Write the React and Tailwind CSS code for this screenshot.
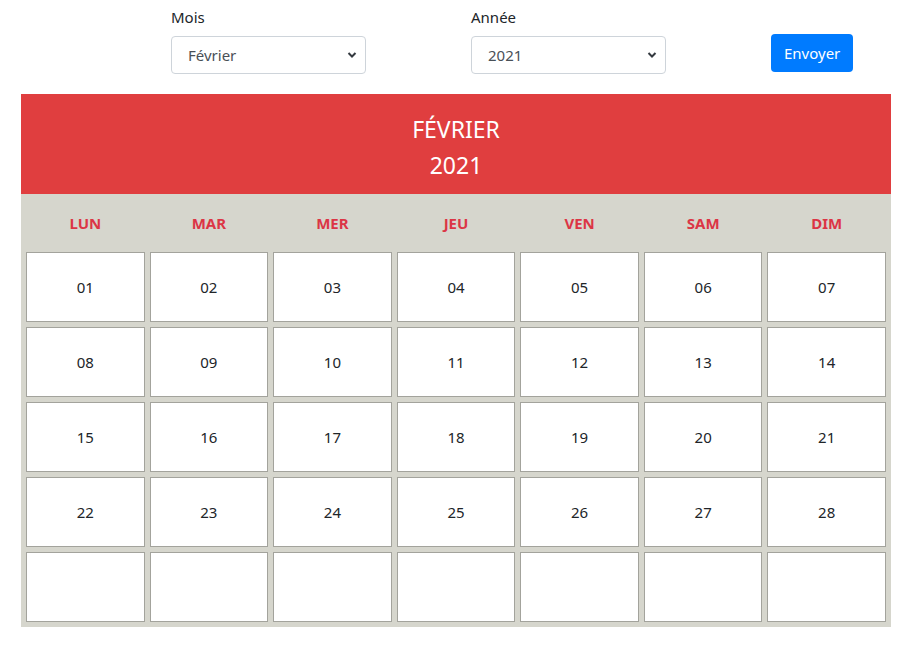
import { useState } from 'react';

const MOIS = ['Janvier', 'Février', 'Mars', 'Avril', 'Mai', 'Juin', 'Juillet', 'Août', 'Septembre', 'Octobre', 'Novembre', 'Décembre'];
const JOURS = ['LUN', 'MAR', 'MER', 'JEU', 'VEN', 'SAM', 'DIM'];

function Chevron() {
  return (
    <svg className="pointer-events-none absolute right-[9px] top-1/2 -translate-y-1/2" width="10" height="7" viewBox="0 0 10 7">
      <path d="M1.5 1.5 L5 5 L8.5 1.5" fill="none" stroke="#343a40" strokeWidth="2" />
    </svg>
  );
}

function Field({ label, value, onChange, options }) {
  return (
    <div className="w-[195px]">
      <label className="block text-[15px] leading-[22px] text-[#212529] mb-[8px]">{label}</label>
      <div className="relative">
        <select
          value={value}
          onChange={e => onChange(e.target.value)}
          className="appearance-none w-full h-[38px] pl-4 pr-7 border border-[#ced4da] rounded-[4px] bg-white text-[15px] text-[#495057] outline-none"
        >
          {options.map(o => <option key={o} value={o}>{o}</option>)}
        </select>
        <Chevron />
      </div>
    </div>
  );
}

export default function App() {
  const [mois, setMois] = useState('Février');
  const [annee, setAnnee] = useState('2021');

  const days = [];
  for (let i = 1; i <= 28; i++) days.push(String(i).padStart(2, '0'));
  for (let i = 0; i < 7; i++) days.push('');

  return (
    <div className="min-h-screen bg-white pt-[6px] px-[21px]" style={{ fontFamily: '"Noto Sans", "Open Sans", sans-serif' }}>
      <div className="flex items-start pl-[150px]">
        <Field label="Mois" value={mois} onChange={setMois} options={MOIS} />
        <div className="ml-[105px]">
          <Field label="Année" value={annee} onChange={setAnnee} options={['2019', '2020', '2021', '2022']} />
        </div>
        <button className="ml-[105px] mt-[28px] h-[38px] px-[13px] rounded-[4px] bg-[#007bff] text-white text-[15px]">
          Envoyer
        </button>
      </div>

      <div className="mt-[20px] w-[870px]">
        <div className="h-[100px] pt-[5px] bg-[#e03e3f] text-white flex flex-col items-center justify-center">
          <div className="text-[23px] leading-[36px]">{mois.toUpperCase()}</div>
          <div className="text-[23px] leading-[36px]">{annee}</div>
        </div>
        <div className="bg-[#d6d6cd] p-[5px] grid grid-cols-7 gap-[5px]">
          {JOURS.map(j => (
            <div key={j} className="h-[48px] flex items-center justify-center text-[15px] font-bold text-[#dc3545]">
              {j}
            </div>
          ))}
          {days.map((d, i) => (
            <div key={i} className="h-[70px] bg-white border border-[#a3a39c] flex items-center justify-center text-[15px] text-[#212529]">
              {d}
            </div>
          ))}
        </div>
      </div>
    </div>
  );
}
